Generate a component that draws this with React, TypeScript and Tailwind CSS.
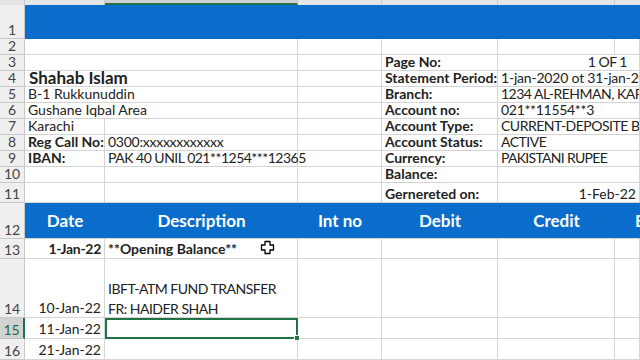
import React from 'react';

const line = 'border-[#d4d4d4]';
const cell = `h-full shrink-0 border-r border-b ${line} flex items-end whitespace-nowrap px-[3px]`;
const A = 'w-[80px]';
const B = 'w-[193px]';
const AB = 'w-[273px]';
const C = 'w-[84px]';
const D = 'w-[116px]';
const E = 'w-[117px]';
const REST = 'flex-1 min-w-0 shrink overflow-hidden';
// Calibri capitals are narrower than Lato's
const caps = 'tracking-[-0.5px]';

function RowHead({ n, active }: { n: number; active?: boolean }) {
  return (
    <div
      className={`w-[25px] h-full shrink-0 flex items-end justify-center text-[14px] leading-[16px] border-b ${
        active
          ? 'bg-[#d2d2d2] text-[#1f6b43] border-r-2 border-r-[#217346] border-b-[#bdbdbd]'
          : 'bg-[#efefef] text-[#444] border-r border-[#c8c8c8]'
      }`}
    >
      {n}
    </div>
  );
}

function Info({ n, left, big, label, value, valueClass }: {
  n: number; left?: string; big?: boolean; label?: string; value?: string; valueClass?: string;
}) {
  return (
    <div className="flex h-4">
      <RowHead n={n} />
      <div className={`${cell} ${AB} ${big ? 'text-[17px] font-bold pl-[4px]' : ''}`}>{left}</div>
      <div className={`${cell} ${C}`} />
      <div className={`${cell} ${D} font-bold`}>{label}</div>
      <div className={`${cell} ${REST} ${valueClass ?? ''}`}>{value}</div>
    </div>
  );
}

export default function App() {
  return (
    <div className="w-[640px] h-[360px] overflow-hidden bg-white relative font-['Lato',sans-serif] text-[14px] leading-[16px] text-[#222]">
      {/* column header strip */}
      <div className="flex h-[5px]">
        <div className="w-[25px] shrink-0 bg-[#e4e4e4] border-r border-[#c8c8c8]" />
        <div className={`${A} shrink-0 bg-[#e6e6e6] border-r border-[#c8c8c8]`} />
        <div className={`${B} shrink-0 bg-[#d2d2d2] border-r border-[#c8c8c8] border-b-2 border-b-[#217346]`} />
        <div className={`${C} shrink-0 bg-[#e6e6e6] border-r border-[#c8c8c8]`} />
        <div className={`${D} shrink-0 bg-[#e6e6e6] border-r border-[#c8c8c8]`} />
        <div className={`${E} shrink-0 bg-[#e6e6e6] border-r border-[#c8c8c8]`} />
        <div className="flex-1 bg-[#e6e6e6]" />
      </div>

      {/* row 1 banner */}
      <div className="flex h-[34px]">
        <RowHead n={1} />
        <div className="flex-1 bg-[#0a6dcc]" />
      </div>

      {/* row 2 */}
      <div className="flex h-4">
        <RowHead n={2} />
        <div className={`${cell} ${AB}`} />
        <div className={`${cell} ${C}`} />
        <div className={`${cell} ${D}`} />
        <div className={`${cell} ${E}`} />
        <div className={`${cell} ${REST}`} />
      </div>

      <Info n={3} label="Page No:" value="1 OF 1" valueClass={`justify-end pr-[12px] ${caps}`} />
      <Info n={4} left="Shahab Islam" big label="Statement Period:" value="1-jan-2020 ot 31-jan-2020" valueClass="tracking-[-0.2px]" />
      <Info n={5} left="B-1 Rukkunuddin" label="Branch:" value="1234 AL-REHMAN, KARACHI" valueClass={caps} />
      <Info n={6} left="Gushane Iqbal Area" label="Account no:" value="021**11554**3" valueClass="tracking-[-0.3px]" />

      <div className="flex h-4">
        <RowHead n={7} />
        <div className={`${cell} ${A}`}>Karachi</div>
        <div className={`${cell} ${B}`} />
        <div className={`${cell} ${C}`} />
        <div className={`${cell} ${D} font-bold`}>Account Type:</div>
        <div className={`${cell} ${REST} ${caps}`}>CURRENT-DEPOSITE BANK</div>
      </div>
      <div className="flex h-4">
        <RowHead n={8} />
        <div className={`${cell} ${A} font-bold`}>Reg Call No:</div>
        <div className={`${cell} ${B} tracking-[-0.25px]`}>0300:xxxxxxxxxxxx</div>
        <div className={`${cell} ${C}`} />
        <div className={`${cell} ${D} font-bold`}>Account Status:</div>
        <div className={`${cell} ${REST} ${caps}`}>ACTIVE</div>
      </div>
      <div className="flex h-4">
        <RowHead n={9} />
        <div className={`${cell} ${A} font-bold`}>IBAN:</div>
        <div className={`${cell} ${B} ${caps}`}>PAK 40 UNIL 021**1254***12365</div>
        <div className={`${cell} ${C}`} />
        <div className={`${cell} ${D} font-bold`}>Currency:</div>
        <div className={`${cell} ${REST} tracking-[-0.7px]`}>PAKISTANI RUPEE</div>
      </div>
      <div className="flex h-4">
        <RowHead n={10} />
        <div className={`${cell} ${A}`} />
        <div className={`${cell} ${B}`} />
        <div className={`${cell} ${C}`} />
        <div className={`${cell} ${D} font-bold`}>Balance:</div>
        <div className={`${cell} ${REST}`} />
      </div>
      <div className="flex h-5">
        <RowHead n={11} />
        <div className={`${cell} ${A}`} />
        <div className={`${cell} ${B}`} />
        <div className={`${cell} ${C}`} />
        <div className={`${cell} ${D} font-bold`}>Gernereted on:</div>
        <div className={`${cell} ${REST} justify-end pr-[3px]`}>1-Feb-22</div>
      </div>

      {/* table header row 12 */}
      <div className="flex h-9">
        <RowHead n={12} />
        <div className="flex-1 flex bg-[#0a6dcc] text-white font-bold text-[17px] leading-[18px] border-b border-[#d4d4d4]">
          <div className={`${A} shrink-0 flex items-center justify-center`}>Date</div>
          <div className={`${B} shrink-0 flex items-center justify-center`}>Description</div>
          <div className={`${C} shrink-0 flex items-center justify-center`}>Int no</div>
          <div className={`${D} shrink-0 flex items-center justify-center`}>Debit</div>
          <div className={`${E} shrink-0 flex items-center justify-center`}>Credit</div>
          <div className="flex-1 flex items-center pl-[20px] overflow-hidden whitespace-nowrap">Balance</div>
        </div>
      </div>

      {/* row 13 */}
      <div className="flex h-5 leading-[18px]">
        <RowHead n={13} />
        <div className={`${cell} ${A} justify-end font-bold tracking-[-0.3px]`}>1-Jan-22</div>
        <div className={`${cell} ${B} font-bold`}>**Opening Balance**</div>
        <div className={`${cell} ${C}`} />
        <div className={`${cell} ${D}`} />
        <div className={`${cell} ${E}`} />
        <div className={`${cell} ${REST}`} />
      </div>

      {/* row 14 */}
      <div className="flex h-[59px] leading-[18px]">
        <RowHead n={14} />
        <div className={`${cell} ${A} justify-end`}>10-Jan-22</div>
        <div className={`${cell} ${B} flex-col !items-start justify-end text-[14px] leading-[20px] ${caps}`}>
          <span className="translate-y-[2px]">IBFT-ATM FUND TRANSFER</span>
          <span className="translate-y-[2px]">FR: HAIDER SHAH</span>
        </div>
        <div className={`${cell} ${C}`} />
        <div className={`${cell} ${D}`} />
        <div className={`${cell} ${E}`} />
        <div className={`${cell} ${REST}`} />
      </div>

      {/* row 15 (selected) */}
      <div className="flex h-[21px] leading-[19px]">
        <RowHead n={15} active />
        <div className={`${cell} ${A} justify-end`}>11-Jan-22</div>
        <div className={`h-full shrink-0 ${B} border-2 border-[#217346] relative`}>
          <div className="absolute -right-[4px] -bottom-[4px] w-[6px] h-[6px] bg-[#217346] border border-white" />
        </div>
        <div className={`${cell} ${C}`} />
        <div className={`${cell} ${D}`} />
        <div className={`${cell} ${E}`} />
        <div className={`${cell} ${REST}`} />
      </div>

      {/* row 16 */}
      <div className="flex h-[21px] leading-[19px]">
        <RowHead n={16} />
        <div className={`${cell} ${A} justify-end`}>21-Jan-22</div>
        <div className={`${cell} ${B}`} />
        <div className={`${cell} ${C}`} />
        <div className={`${cell} ${D}`} />
        <div className={`${cell} ${E}`} />
        <div className={`${cell} ${REST}`} />
      </div>

      {/* Excel cell cursor */}
      <svg className="absolute left-[260px] top-[240px]" width="15" height="15" viewBox="0 0 15 15">
        <path
          d="M5 1.5h5v3.5h3.5v5H10v3.5H5V10H1.5V5H5z"
          fill="#fff"
          stroke="#000"
          strokeWidth="1.3"
          strokeLinejoin="round"
        />
      </svg>
    </div>
  );
}
